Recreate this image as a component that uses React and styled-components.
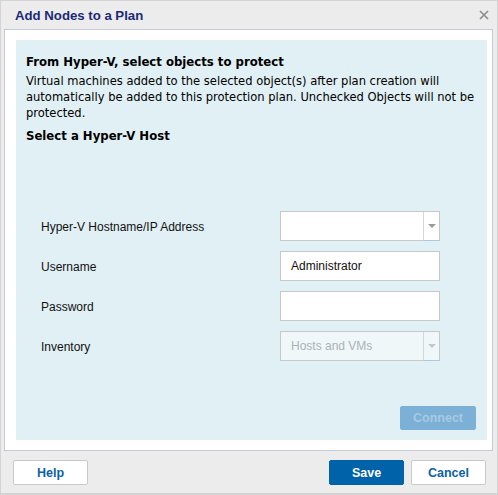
import React from 'react'
import styled, { createGlobalStyle } from 'styled-components'

const GlobalStyle = createGlobalStyle`
  html, body {
    margin: 0;
    padding: 0;
    background: #ececec;
  }
`

const Dialog = styled.div`
  box-sizing: border-box;
  width: 498px;
  height: 495px;
  background: #ececec;
  border: 1px solid #d4d4d4;
  border-bottom-width: 2px;
  display: flex;
  flex-direction: column;
  font-family: 'Liberation Sans', Arial, sans-serif;
`

const TitleBar = styled.div`
  height: 28px;
  display: flex;
  align-items: center;
  justify-content: space-between;
  padding: 0 6px 0 14px;
`

const Title = styled.h1`
  margin: 0;
  font-size: 13.2px;
  font-weight: bold;
  color: #1b2a78;
`

const Close = styled.svg`
  width: 10px;
  height: 10px;
  margin-right: 2px;
`

const Panel = styled.div`
  box-sizing: border-box;
  height: 422px;
  margin: 0 4px 0 3px;
  background: #fff;
  border: 1px solid #c5cad6;
  padding: 10px 5px 10px 11px;
`

const Content = styled.div`
  box-sizing: border-box;
  height: 100%;
  background: #e1f0f4;
  padding: 14px 10px 10px 10px;
  display: flex;
  flex-direction: column;
  font-family: 'DejaVu Sans Condensed', Tahoma, sans-serif;
  color: #000;
`

const Heading = styled.div`
  font-size: 13px;
  font-weight: bold;
  line-height: 16px;
`

const Text = styled.p`
  margin: 3px 0 0;
  font-size: 12.8px;
  line-height: 16px;
`

const SubHeading = styled(Heading)`
  margin-top: 7px;
`

const Form = styled.div`
  margin: 67px 0 0 15px;
  display: grid;
  grid-template-columns: 239px 160px;
  row-gap: 10px;
  align-items: center;
`

const Label = styled.label`
  font-family: 'Liberation Sans', Arial, sans-serif;
  font-size: 12px;
  color: #111;
  padding-top: 1px;
`

const Field = styled.div`
  box-sizing: border-box;
  height: 30px;
  border: 1px solid #c8c8c8;
  background: ${p => (p.disabled ? '#eff7f9' : '#fff')};
  display: flex;
  align-items: center;
  font-family: 'Liberation Sans', Arial, sans-serif;
  font-size: 12px;
  color: ${p => (p.disabled ? '#a9b3b6' : '#111')};
`

const FieldText = styled.span`
  flex: 1;
  padding-left: 10px;
`

const Arrow = styled.div`
  width: 16px;
  height: 29px;
  border-left: 1px solid #d6d6d6;
  border-bottom: 1px solid #a9c8e3;
  box-sizing: border-box;
  display: flex;
  align-items: center;
  justify-content: center;
  margin-bottom: -1px;
  align-self: flex-start;

  &::after {
    content: '';
    border-left: 4px solid transparent;
    border-right: 4px solid transparent;
    border-top: 4px solid ${p => (p.disabled ? '#c4c8ca' : '#9a9a9a')};
  }
`

const Actions = styled.div`
  margin-top: auto;
  display: flex;
  justify-content: flex-end;
  padding-right: 1px;
`

const Button = styled.button`
  box-sizing: border-box;
  width: ${p => p.w || 75}px;
  height: ${p => p.h || 25}px;
  border-radius: 2px;
  font-family: 'Liberation Sans', Arial, sans-serif;
  font-size: 12.5px;
  font-weight: bold;
  cursor: pointer;
  border: 1px solid ${p => (p.primary ? '#0062a8' : p.faded ? '#7db0d6' : '#c9c9c9')};
  background: ${p => (p.primary ? '#0062a8' : p.faded ? '#7db0d6' : '#fff')};
  color: ${p => (p.primary ? '#fff' : p.faded ? '#a7c9e2' : '#0a62a8')};
`

const Footer = styled.div`
  display: flex;
  align-items: center;
  padding: 9px 11px 0 12px;
  gap: 7px;
`

const Spacer = styled.div`
  flex: 1;
`

const Select = ({ value, disabled }) => (
  <Field disabled={disabled}>
    <FieldText>{value}</FieldText>
    <Arrow disabled={disabled} />
  </Field>
)

const App = () => (
  <>
    <GlobalStyle />
    <Dialog>
      <TitleBar>
        <Title>Add Nodes to a Plan</Title>
        <Close viewBox="0 0 10 10">
          <path d="M1 1L9 9M9 1L1 9" stroke="#8a8a8a" strokeWidth="1.6" />
        </Close>
      </TitleBar>
      <Panel>
        <Content>
          <Heading>From Hyper-V, select objects to protect</Heading>
          <Text>
            Virtual machines added to the selected object(s) after plan creation will
            automatically be added to this protection plan. Unchecked Objects will not be
            protected.
          </Text>
          <SubHeading>Select a Hyper-V Host</SubHeading>
          <Form>
            <Label>Hyper-V Hostname/IP Address</Label>
            <Select value="" />
            <Label>Username</Label>
            <Field>
              <FieldText>Administrator</FieldText>
            </Field>
            <Label>Password</Label>
            <Field>
              <FieldText />
            </Field>
            <Label>Inventory</Label>
            <Select value="Hosts and VMs" disabled />
          </Form>
          <Actions>
            <Button faded w={76} h={24}>Connect</Button>
          </Actions>
        </Content>
      </Panel>
      <Footer>
        <Button>Help</Button>
        <Spacer />
        <Button primary>Save</Button>
        <Button>Cancel</Button>
      </Footer>
    </Dialog>
  </>
)

export default App
